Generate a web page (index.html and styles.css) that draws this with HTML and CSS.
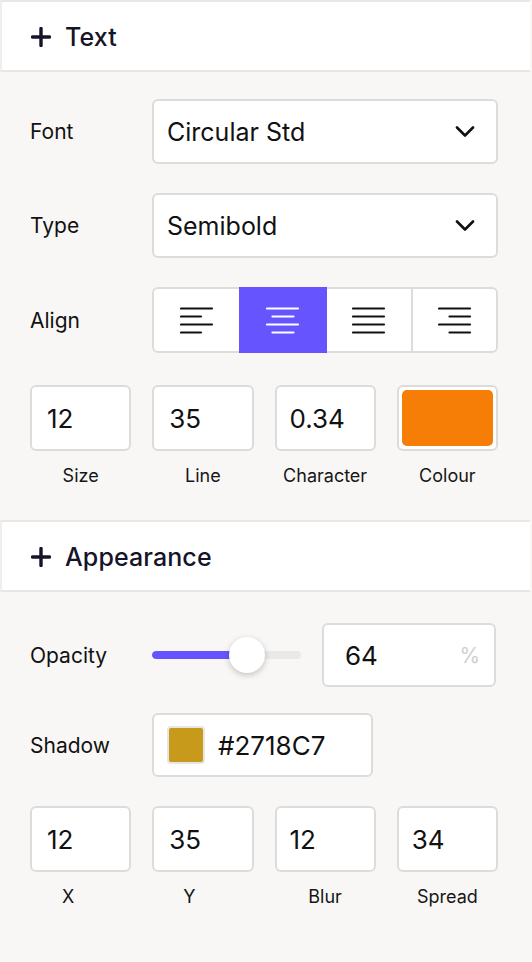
FILE: index.html
```html
<!DOCTYPE html>
<html lang="en">
<head>
<meta charset="utf-8">
<title>Text panel</title>
<link rel="stylesheet" href="styles.css">
</head>
<body>
<div class="panel">
  <div class="section-head">
    <svg class="plus" width="20" height="20" viewBox="0 0 20 20"><path d="M10 1.5v17M1.5 10h17" stroke="currentColor" stroke-width="3.4" stroke-linecap="round"/></svg>
    <span>Text</span>
  </div>
  <div class="section-body text-body">
    <div class="row">
      <span class="label">Font</span>
      <div class="select"><span>Circular Std</span>
        <svg class="chev" width="20" height="11" viewBox="0 0 20 11"><path d="M2 1.5l8 8 8-8" fill="none" stroke="currentColor" stroke-width="2.6" stroke-linecap="round" stroke-linejoin="round"/></svg>
      </div>
    </div>
    <div class="row">
      <span class="label">Type</span>
      <div class="select"><span>Semibold</span>
        <svg class="chev" width="20" height="11" viewBox="0 0 20 11"><path d="M2 1.5l8 8 8-8" fill="none" stroke="currentColor" stroke-width="2.6" stroke-linecap="round" stroke-linejoin="round"/></svg>
      </div>
    </div>
    <div class="row">
      <span class="label">Align</span>
      <div class="segmented">
        <div class="seg">
          <svg width="34" height="28" viewBox="0 0 34 28"><g stroke="currentColor" stroke-width="2.2" stroke-linecap="round"><path d="M1 2.5h31M1 10.5h20M1 18.5h31M1 26.5h20"/></g></svg>
        </div>
        <div class="seg active">
          <svg width="34" height="28" viewBox="0 0 34 28"><g stroke="currentColor" stroke-width="2.2" stroke-linecap="round"><path d="M1 2.5h31M6.5 10.5h21M1 18.5h31M6.5 26.5h21"/></g></svg>
        </div>
        <div class="seg">
          <svg width="34" height="28" viewBox="0 0 34 28"><g stroke="currentColor" stroke-width="2.2" stroke-linecap="round"><path d="M1 2.5h31M1 10.5h31M1 18.5h31M1 26.5h31"/></g></svg>
        </div>
        <div class="seg divided">
          <svg width="34" height="28" viewBox="0 0 34 28"><g stroke="currentColor" stroke-width="2.2" stroke-linecap="round"><path d="M1 2.5h31M11.5 10.5h20.5M1 18.5h31M11.5 26.5h20.5"/></g></svg>
        </div>
      </div>
    </div>
    <div class="quad">
      <div class="field"><div class="box">12</div><span class="cap">Size</span></div>
      <div class="field"><div class="box">35</div><span class="cap">Line</span></div>
      <div class="field"><div class="box box-tight">0.34</div><span class="cap">Character</span></div>
      <div class="field"><div class="box swatch-box"><div class="swatch"></div></div><span class="cap">Colour</span></div>
    </div>
  </div>

  <div class="section-head">
    <svg class="plus" width="20" height="20" viewBox="0 0 20 20"><path d="M10 1.5v17M1.5 10h17" stroke="currentColor" stroke-width="3.4" stroke-linecap="round"/></svg>
    <span>Appearance</span>
  </div>
  <div class="section-body appearance-body">
    <div class="row opacity-row">
      <span class="label">Opacity</span>
      <div class="slider">
        <div class="track"><div class="fill" style="width: 55%"></div></div>
        <div class="knob" style="left: 64%"></div>
      </div>
      <div class="box pct"><span>64</span><span class="unit">%</span></div>
    </div>
    <div class="row">
      <span class="label">Shadow</span>
      <div class="box color-input"><span class="chip"></span><span>#2718C7</span></div>
    </div>
    <div class="quad">
      <div class="field"><div class="box">12</div><span class="cap cap-left cap-x">X</span></div>
      <div class="field"><div class="box">35</div><span class="cap cap-left cap-y">Y</span></div>
      <div class="field"><div class="box box-tight">12</div><span class="cap">Blur</span></div>
      <div class="field"><div class="box box-tight">34</div><span class="cap">Spread</span></div>
    </div>
  </div>
</div>
</body>
</html>
```

FILE: styles.css
```css
* { box-sizing: border-box; }

html, body {
  margin: 0;
  padding: 0;
  background: #f8f7f5;
}

body {
  font-family: Inter, "Noto Sans", "Liberation Sans", sans-serif;
  color: #111114;
  width: 532px;
}

.panel {
  display: flex;
  flex-direction: column;
}

.section-head {
  height: 72px;
  margin-right: 2px;
  background: #ffffff;
  border-top: 2px solid #e8e8e7;
  border-bottom: 2px solid #e6e6e4;
  border-left: 2px solid #efefed;
  display: flex;
  align-items: center;
  gap: 14px;
  padding-left: 29px;
  padding-top: 2px;
  font-size: 25px;
  font-weight: 500;
  color: #15142a;
  letter-spacing: 0.1px;
}

.plus { flex: none; color: #15142a; }

.section-body {
  padding: 27px 34px 0 30px;
  display: flex;
  flex-direction: column;
}

.text-body { gap: 29px; padding-bottom: 33px; }
.appearance-body { padding-top: 31px; gap: 26px; height: 371px; }

.row {
  display: grid;
  grid-template-columns: 122px 1fr;
  align-items: center;
}

.label {
  font-size: 21px;
  color: #121212;
}

.select {
  height: 65px;
  background: #fff;
  border: 2px solid #dcdcdc;
  border-radius: 6px;
  display: flex;
  align-items: center;
  justify-content: space-between;
  padding: 0 21px 0 13px;
  font-size: 25px;
  color: #111;
}

.chev { color: #111; }

.segmented {
  height: 66px;
  background: #fff;
  border: 2px solid #dcdcdc;
  border-radius: 6px;
  display: grid;
  grid-template-columns: 85px 88px 84px 1fr;
  overflow: visible;
  position: relative;
}

.seg {
  display: flex;
  align-items: center;
  justify-content: center;
  color: #111;
}

.seg.active {
  background: #6655ff;
  color: #fff;
  margin: -2px 0;
}

.seg.divided { border-left: 2px solid #dcdcdc; }

.quad {
  display: grid;
  grid-template-columns: repeat(4, 1fr);
  column-gap: 21px;
  margin-top: 3px;
}

.field {
  display: flex;
  flex-direction: column;
  gap: 14px;
}

.box {
  height: 66px;
  background: #fff;
  border: 2px solid #dcdcdc;
  border-radius: 6px;
  display: flex;
  align-items: center;
  padding-left: 15px;
  font-size: 26px;
  color: #111;
}

.box-tight { padding-left: 13px; }

.swatch-box { padding: 3px; }

.swatch {
  width: 100%;
  height: 100%;
  background: #f67d06;
  border-radius: 5px;
}

.cap {
  font-size: 18px;
  text-align: center;
  line-height: 22px;
  color: #161616;
}

.cap-left { text-align: left; }
.cap-x { padding-left: 32px; }
.cap-y { padding-left: 31px; }

.opacity-row {
  grid-template-columns: 122px 149px 1fr;
  column-gap: 0;
}

.slider {
  position: relative;
  height: 36px;
  display: flex;
  align-items: center;
}

.track {
  width: 100%;
  height: 8px;
  border-radius: 4px;
  background: #e9e9e9;
  overflow: hidden;
}

.fill {
  height: 100%;
  background: #6655ff;
  border-radius: 4px;
}

.knob {
  position: absolute;
  top: 0;
  width: 36px;
  height: 36px;
  margin-left: -18px;
  border-radius: 50%;
  background: #fff;
  box-shadow: 0 2px 6px rgba(0, 0, 0, 0.22);
}

.pct {
  margin-left: 21px;
  margin-right: 2px;
  height: 64px;
  justify-content: space-between;
  padding-left: 21px;
  padding-right: 14px;
}

.unit {
  font-size: 21px;
  color: #cfcfcf;
}

.color-input {
  width: 221px;
  height: 64px;
  padding-left: 13px;
  gap: 13px;
}

.chip {
  width: 38px;
  height: 38px;
  border-radius: 4px;
  background: #c89a1b;
  border: 2px solid #e6e6e6;
  flex: none;
}
```
